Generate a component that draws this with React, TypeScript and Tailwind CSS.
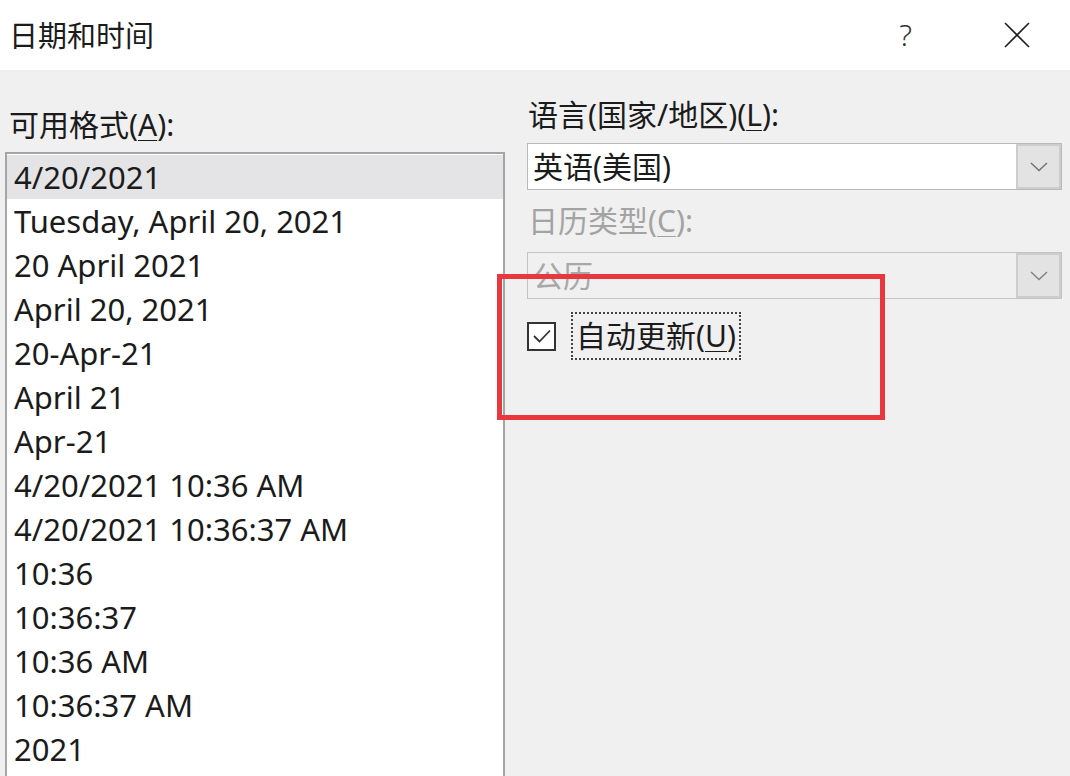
import React from "react";

const items = [
  "4/20/2021",
  "Tuesday, April 20, 2021",
  "20 April 2021",
  "April 20, 2021",
  "20-Apr-21",
  "April 21",
  "Apr-21",
  "4/20/2021 10:36 AM",
  "4/20/2021 10:36:37 AM",
  "10:36",
  "10:36:37",
  "10:36 AM",
  "10:36:37 AM",
  "2021",
];

const font = { fontFamily: '"Noto Sans", "Noto Sans CJK SC", sans-serif' };

function Chevron({ color }: { color: string }) {
  return (
    <svg width="18" height="10" viewBox="0 0 18 10" fill="none">
      <path d="M1 1 L9 8.5 L17 1" stroke={color} strokeWidth="1.4" />
    </svg>
  );
}

export default function App() {
  return (
    <div
      className="relative w-[1070px] h-[776px] overflow-hidden bg-[#f0f0f0] text-[#1b1b1b]"
      style={font}
    >
      {/* Title bar */}
      <div className="h-[70px] bg-white flex items-center">
        <div className="pl-[9px] text-[29px] leading-none">日期和时间</div>
        <div className="ml-auto flex items-center">
          <span className="text-[30px] leading-none mr-[92px] text-[#333] font-light">?</span>
          <svg width="26" height="26" viewBox="0 0 26 26" className="mr-[40px]">
            <path d="M1 1 L25 25 M25 1 L1 25" stroke="#222" strokeWidth="1.6" />
          </svg>
        </div>
      </div>

      <div className="flex">
        {/* Left column */}
        <div className="w-[505px] pl-[5px] flex flex-col">
          <div className="h-[82px] flex items-center pl-[4px] pt-[28px] text-[30px] leading-none">
            可用格式(<span className="underline underline-offset-4 decoration-1">A</span>):
          </div>
          <div className="h-[700px] bg-white border-2 border-[#a5a5a5] border-b-0 pt-[1px]">
            {items.map((t, i) => (
              <div
                key={t}
                className={
                  "h-[44px] flex items-center pl-[7px] text-[31px] leading-none " +
                  (i === 0 ? "bg-[#e4e4e6]" : "")
                }
              >
                {t}
              </div>
            ))}
          </div>
        </div>

        {/* Right column */}
        <div className="ml-[22px] w-[535px] flex flex-col">
          <div className="h-[73px] flex items-center pt-[16px] pl-[1px] text-[30px] leading-none">
            语言(国家/地区)(<span className="underline underline-offset-4 decoration-1">L</span>):
          </div>
          <div className="h-[47px] flex bg-white border border-[#b9b9b9]">
            <div className="flex-1 flex items-center pl-[5px] text-[30px] leading-none">英语(美国)</div>
            <div className="w-[45px] bg-[#e3e3e3] border-2 border-[#cdcdcd] flex items-center justify-center">
              <Chevron color="#707070" />
            </div>
          </div>
          <div className="h-[62px] flex items-center pl-[1px] text-[30px] leading-none text-[#a3a3a3]">
            日历类型(<span className="underline underline-offset-4 decoration-1">C</span>):
          </div>
          <div className="h-[47px] flex bg-[#f0f0f0] border border-[#c3c3c3]">
            <div className="flex-1 flex items-center pl-[5px] text-[30px] leading-none text-[#a8a8a8]">公历</div>
            <div className="w-[45px] bg-[#e3e3e3] border-2 border-[#cdcdcd] flex items-center justify-center">
              <Chevron color="#808080" />
            </div>
          </div>
          <div className="mt-[13px] flex items-center h-[48px]">
            <div className="w-[29px] h-[29px] border-2 border-[#333] bg-white flex items-center justify-center">
              <svg width="20" height="16" viewBox="0 0 20 16">
                <path d="M2 8 L7.5 13.5 L18 2.5" stroke="#333" strokeWidth="1.8" fill="none" />
              </svg>
            </div>
            <div className="ml-[15px] h-[48px] px-[3px] flex items-center border-2 border-dotted border-[#444] text-[30px] leading-none">
              自动更新(<span className="underline underline-offset-4 decoration-1">U</span>)
            </div>
          </div>
        </div>
      </div>

      {/* Red annotation box */}
      <div className="absolute left-[497px] top-[274px] w-[388px] h-[146px] border-[5px] border-[#e8383d]" />
    </div>
  );
}
